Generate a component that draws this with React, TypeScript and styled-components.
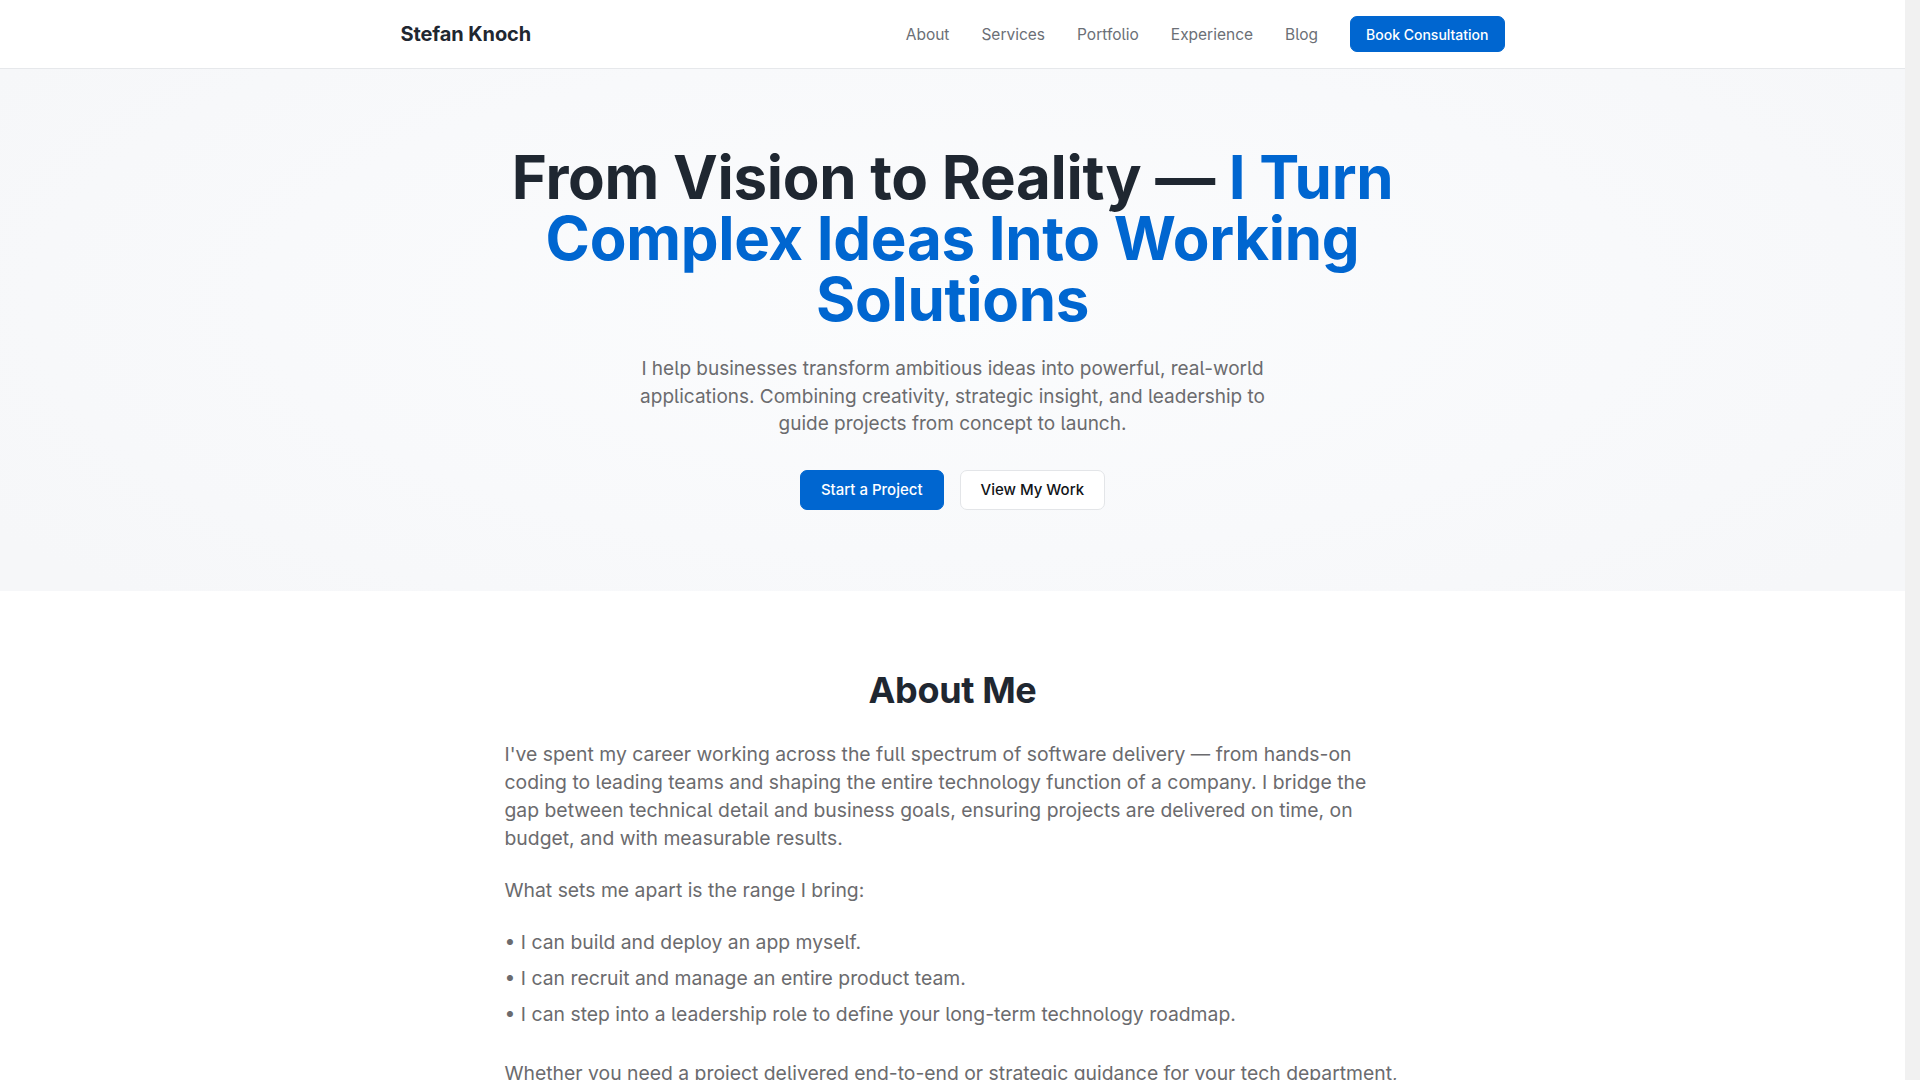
import styled, { createGlobalStyle } from "styled-components";

const GlobalStyle = createGlobalStyle`
    * {
        box-sizing: border-box;
    }
    html {
        background: #f1f1f1;
    }
    body {
        margin: 0 15px 0 0;
        background: #ffffff;
        font-family: Inter, "Noto Sans", "Liberation Sans", sans-serif;
        color: #1f2731;
        -webkit-font-smoothing: antialiased;
    }
`

const NavBar = styled.header`
    height: 69px;
    background: #ffffff;
    border-bottom: 1px solid #e6e8eb;
`

const Container = styled.div`
    max-width: 1200px;
    margin: 0 auto;
    padding: 0 48px;
    height: 100%;
`

const NavInner = styled(Container)`
    display: flex;
    align-items: center;
    justify-content: space-between;
`

const Logo = styled.a`
    font-size: 20px;
    font-weight: 700;
    color: #1f2731;
    letter-spacing: -0.005em;
    text-decoration: none;
`

const NavLinks = styled.nav`
    display: flex;
    align-items: center;
    gap: 32px;
`

const NavLink = styled.a`
    font-size: 15.5px;
    color: #6b6f76;
    text-decoration: none;
    font-feature-settings: "cv05";
`

const Button = styled.a<{ $variant?: "primary" | "outline" }>`
    display: inline-flex;
    align-items: center;
    justify-content: center;
    font-size: 15px;
    font-weight: 500;
    text-decoration: none;
    border-radius: 7px;
    padding: 0 20px;
    height: 40px;
    background: ${(p) => (p.$variant === "outline" ? "#ffffff" : "#0066d0")};
    color: ${(p) => (p.$variant === "outline" ? "#111418" : "#ffffff")};
    border: 1px solid ${(p) => (p.$variant === "outline" ? "#e3e5e8" : "#0066d0")};
`

const NavButton = styled(Button)`
    height: 36px;
    padding: 0 15px;
    font-size: 14px;
`

const Hero = styled.section`
    background: radial-gradient(ellipse 60% 80% at 50% 45%, #fbfcfd 0%, #f8f9fb 60%, #f6f7f9 100%);
    padding: 78px 0 81px;
    text-align: center;
`

const HeroTitle = styled.h1`
    max-width: 900px;
    margin: 0 auto;
    font-size: 60px;
    font-weight: 700;
    line-height: 61px;
    letter-spacing: -0.005em;
    color: #1f2731;
`

const Accent = styled.span`
    color: #0066d0;
`

const HeroText = styled.p`
    max-width: 650px;
    margin: 25px auto 0;
    font-size: 19px;
    line-height: 27.5px;
    color: #6b6b6e;
    font-feature-settings: "cv05";
`

const HeroActions = styled.div`
    display: flex;
    justify-content: center;
    gap: 16px;
    margin-top: 32px;
`

const Section = styled.section`
    padding: 78px 0 40px;
`

const Narrow = styled.div`
    max-width: 896px;
    margin: 0 auto;
`

const SectionTitle = styled.h2`
    margin: 0 0 28px;
    text-align: center;
    font-size: 36px;
    font-weight: 700;
    line-height: 1.2;
    letter-spacing: -0.01em;
    color: #1f2731;
`

const Paragraph = styled.p`
    margin: 0 0 24px;
    font-size: 19.35px;
    line-height: 28px;
    color: #6b6b6e;
    font-feature-settings: "cv05";
`

const BulletList = styled.ul`
    list-style: none;
    margin: 0 0 31px;
    padding: 0;
    display: flex;
    flex-direction: column;
    gap: 8px;
`

const Bullet = styled.li`
    font-size: 19.35px;
    line-height: 28px;
    color: #6b6b6e;
    font-feature-settings: "cv05";
`

const links = ["About", "Services", "Portfolio", "Experience", "Blog"];

const bullets = [
    "I can build and deploy an app myself.",
    "I can recruit and manage an entire product team.",
    "I can step into a leadership role to define your long-term technology roadmap.",
];

export default function App() {
    return (
        <>
            <GlobalStyle />
            <NavBar>
                <NavInner>
                    <Logo href="#">Stefan Knoch</Logo>
                    <NavLinks>
                        {links.map((l) => (
                            <NavLink key={l} href="#">{l}</NavLink>
                        ))}
                        <NavButton href="#">Book Consultation</NavButton>
                    </NavLinks>
                </NavInner>
            </NavBar>

            <Hero>
                <Container>
                    <HeroTitle>
                        From Vision to Reality — <Accent>I Turn Complex Ideas Into Working Solutions</Accent>
                    </HeroTitle>
                    <HeroText>
                        I help businesses transform ambitious ideas into powerful, real-world applications.
                        Combining creativity, strategic insight, and leadership to guide projects from concept to launch.
                    </HeroText>
                    <HeroActions>
                        <Button href="#">Start a Project</Button>
                        <Button href="#" $variant="outline">View My Work</Button>
                    </HeroActions>
                </Container>
            </Hero>

            <Section>
                <Container>
                    <Narrow>
                        <SectionTitle>About Me</SectionTitle>
                        <Paragraph>
                            I've spent my career working across the full spectrum of software delivery — from
                            hands-on coding to leading teams and shaping the entire technology function of a
                            company. I bridge the gap between technical detail and business goals, ensuring
                            projects are delivered on time, on budget, and with measurable results.
                        </Paragraph>
                        <Paragraph>What sets me apart is the range I bring:</Paragraph>
                        <BulletList>
                            {bullets.map((b) => (
                                <Bullet key={b}>• {b}</Bullet>
                            ))}
                        </BulletList>
                        <Paragraph>
                            Whether you need a project delivered end-to-end or strategic guidance for your tech
                            department, I bring the experience to make it happen.
                        </Paragraph>
                    </Narrow>
                </Container>
            </Section>
        </>
    );
}
